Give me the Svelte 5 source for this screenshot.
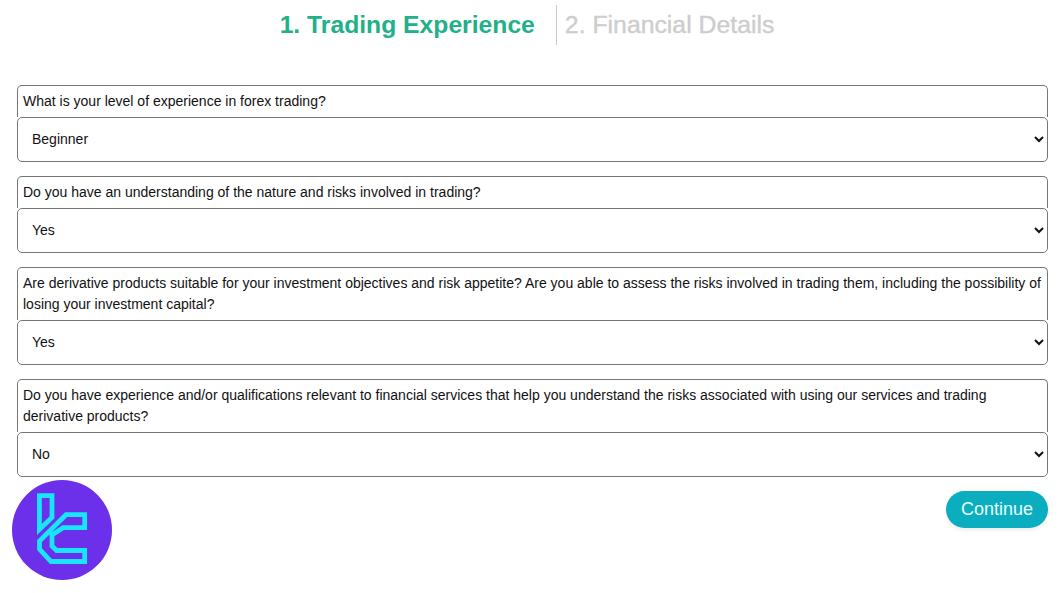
<script>
  const steps = [
    { label: "1. Trading Experience", active: true },
    { label: "2. Financial Details", active: false }
  ];

  const questions = [
    {
      text: "What is your level of experience in forex trading?",
      options: ["Beginner", "Intermediate", "Advanced"],
      value: "Beginner"
    },
    {
      text: "Do you have an understanding of the nature and risks involved in trading?",
      options: ["Yes", "No"],
      value: "Yes"
    },
    {
      text: "Are derivative products suitable for your investment objectives and risk appetite? Are you able to assess the risks involved in trading them, including the possibility of losing your investment capital?",
      options: ["Yes", "No"],
      value: "Yes"
    },
    {
      text: "Do you have experience and/or qualifications relevant to financial services that help you understand the risks associated with using our services and trading derivative products?",
      options: ["Yes", "No"],
      value: "No"
    }
  ];
</script>

<div class="page">
  <header class="steps">
    {#each steps as step}
      <h2 class:active={step.active}>{step.label}</h2>
    {/each}
  </header>

  <form class="form">
    {#each questions as q}
      <div class="question">
        <label>
          <span class="text">{q.text}</span>
          <select value={q.value}>
            {#each q.options as opt}
              <option value={opt}>{opt}</option>
            {/each}
          </select>
        </label>
      </div>
    {/each}

    <div class="actions">
      <button type="button">Continue</button>
    </div>
  </form>

  <div class="logo">
    <svg viewBox="0 0 100 100" width="100" height="100">
      <circle cx="50" cy="50" r="50" fill="#6c2fea" />
      <g fill="none" stroke="#18e6ff" stroke-width="4.800" stroke-linejoin="miter">
        <path d="M27.400 15.700H40V37.500L27.400 49.500Z" />
        <path d="M72.700 34.700H54L27.500 61V69L39 81.500H72.700V70.500H44.500L40 66V55L51 47.700H72.700Z" />
      </g>
    </svg>
  </div>
</div>

<style>
  :global(body) {
    margin: 0;
    background: #fff;
    font-family: "Liberation Sans", Arial, sans-serif;
  }

  .page {
    position: relative;
    height: 593px;
    overflow: hidden;
    padding: 5px 16px 0 17px;
    box-sizing: border-box;
  }

  .steps {
    display: flex;
    justify-content: center;
    height: 40px;
    margin-bottom: 40px;
  }

  h2 {
    margin: 0;
    font-size: 24.800px;
    line-height: 40px;
    font-weight: 400;
    color: #cdcdcd;
    padding: 0 11px 0 8px;
    -webkit-text-stroke: 0.4px #cdcdcd;
  }

  h2.active {
    color: #22b089;
    font-size: 24.700px;
    font-weight: 700;
    padding: 0 21px 0 0;
    border-right: 1px solid #c8c8c8;
    -webkit-text-stroke: 0;
  }

  .form {
    display: flex;
    flex-direction: column;
    gap: 14px;
  }

  .question label {
    display: block;
  }

  .text {
    display: block;
    box-sizing: border-box;
    border: 1px solid #767676;
    border-bottom: 0;
    border-radius: 5px 5px 0 0;
    padding: 5px 5px 5px;
    font-size: 14px;
    line-height: 21px;
    color: #111;
  }

  select {
    display: block;
    width: 100%;
    height: 45px;
    box-sizing: border-box;
    border: 1px solid #767676;
    border-radius: 5px;
    padding: 0 6px 2px 10px;
    background: #fff;
    font-family: "Liberation Sans", Arial, sans-serif;
    font-size: 14px;
    color: #111;
  }

  .actions {
    display: flex;
    justify-content: flex-end;
  }

  button {
    height: 37px;
    padding: 0 15px;
    border: 0;
    border-radius: 19px;
    background: #0baebf;
    box-shadow: 0 2px 4px rgba(0, 0, 0, 0.08);
    color: #e8ffff;
    font-family: "Liberation Sans", Arial, sans-serif;
    font-size: 18px;
  }

  .logo {
    position: absolute;
    left: 12px;
    top: 480px;
    width: 100px;
    height: 100px;
  }
</style>
